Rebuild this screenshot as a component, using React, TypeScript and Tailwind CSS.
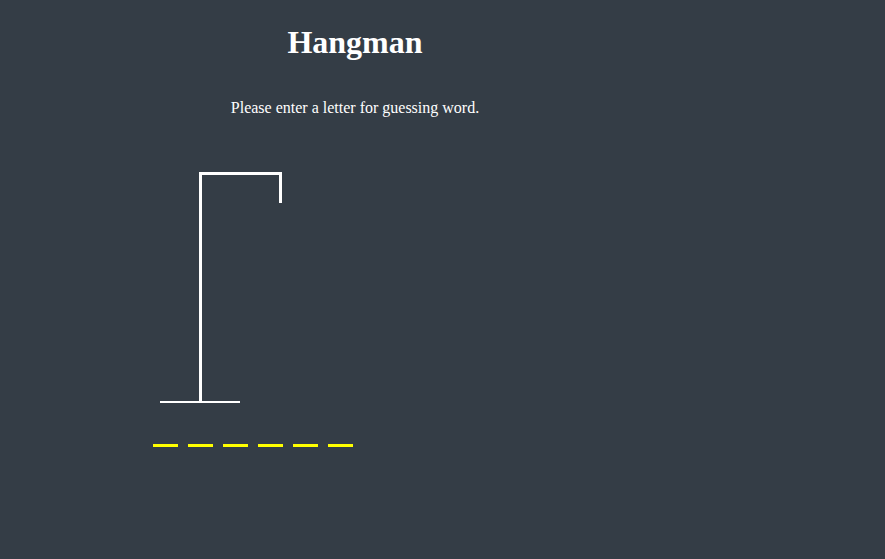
export default function App() {
    const letters = ['', '', '', '', '', ''];

    return (
        <div className="min-h-[559px] w-full bg-[#343d46] text-white font-['Liberation_Serif',serif]">
            <div className="w-[710px] text-center">
                <h1 className="pt-[24px] text-[32px] font-bold leading-[37px]">Hangman</h1>
                <p className="mt-[38px] text-[16px] leading-[18px]">Please enter a letter for guessing word.</p>
            </div>

            {/* gallows */}
            <div className="ml-[150px] mt-[53px]">
                <svg width="140" height="240" viewBox="0 0 140 240">
                    <line x1="10" y1="232" x2="90" y2="232" stroke="#fff" strokeWidth="2" />
                    <line x1="50.5" y1="2" x2="50.5" y2="232" stroke="#fff" strokeWidth="3" />
                    <line x1="49" y1="3.5" x2="131.5" y2="3.5" stroke="#fff" strokeWidth="3" />
                    <line x1="130.5" y1="2" x2="130.5" y2="33" stroke="#fff" strokeWidth="3" />
                </svg>
            </div>

            {/* word */}
            <div className="ml-[153px] mt-[34px] flex gap-[10px]">
                {letters.map((l, i) => (
                    <div key={i} className="w-[25px] h-[3px] bg-[#ffff00]">{l}</div>
                ))}
            </div>
        </div>
    );
}
